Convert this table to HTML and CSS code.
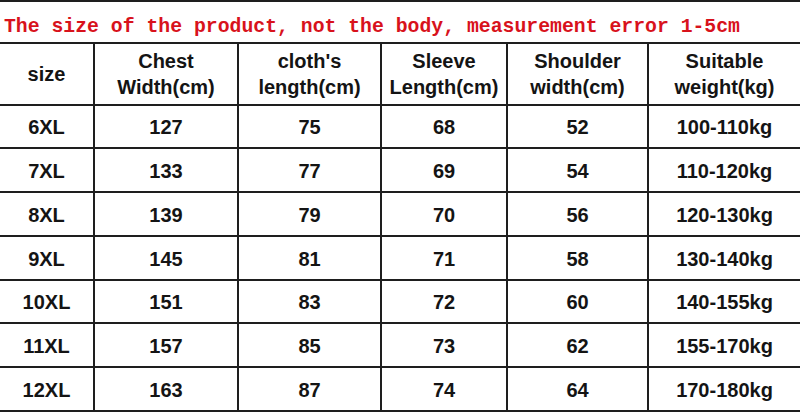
FILE: index.html
```html
<!DOCTYPE html>
<html>
<head>
<meta charset="utf-8">
<link rel="stylesheet" href="styles.css">
</head>
<body>
<div class="title">The size of the product, not the body, measurement error 1-5cm</div>
<table class="sizes">
  <colgroup>
    <col class="c1"><col class="c2"><col class="c3"><col class="c4"><col class="c5"><col class="c6">
  </colgroup>
  <thead>
    <tr>
      <th>size</th>
      <th>Chest<br>Width(cm)</th>
      <th>cloth's<br>length(cm)</th>
      <th>Sleeve<br>Length(cm)</th>
      <th>Shoulder<br>width(cm)</th>
      <th>Suitable<br>weight(kg)</th>
    </tr>
  </thead>
  <tbody>
    <tr><td>6XL</td><td>127</td><td>75</td><td>68</td><td>52</td><td>100-110kg</td></tr>
    <tr><td>7XL</td><td>133</td><td>77</td><td>69</td><td>54</td><td>110-120kg</td></tr>
    <tr><td>8XL</td><td>139</td><td>79</td><td>70</td><td>56</td><td>120-130kg</td></tr>
    <tr><td>9XL</td><td>145</td><td>81</td><td>71</td><td>58</td><td>130-140kg</td></tr>
    <tr><td>10XL</td><td>151</td><td>83</td><td>72</td><td>60</td><td>140-155kg</td></tr>
    <tr><td>11XL</td><td>157</td><td>85</td><td>73</td><td>62</td><td>155-170kg</td></tr>
    <tr><td>12XL</td><td>163</td><td>87</td><td>74</td><td>64</td><td>170-180kg</td></tr>
  </tbody>
</table>
</body>
</html>
```

FILE: styles.css
```css
html, body {
  margin: 0;
  padding: 0;
  background: #ffffff;
  overflow: hidden;
}
body {
  width: 800px;
  height: 413px;
}
.title {
  box-sizing: border-box;
  height: 42px;
  border-top: 2px solid #1e1e1e;
  padding: 9px 0 0 4px;
  line-height: 32px;
  font-family: "Liberation Mono", "DejaVu Sans Mono", monospace;
  font-size: 19.8px;
  font-weight: bold;
  color: #d8121c;
  white-space: nowrap;
}
.sizes {
  border-collapse: separate;
  border-spacing: 0;
  table-layout: fixed;
  width: 800px;
  border-top: 2px solid #1e1e1e;
  font-family: "Liberation Sans", Arial, sans-serif;
  font-weight: bold;
  font-size: 20px;
  color: #141414;
}
.c1 { width: 95px; }
.c2 { width: 144px; }
.c3 { width: 143px; }
.c4 { width: 126px; }
.c5 { width: 141px; }
.c6 { width: 151px; }
.sizes th, .sizes td {
  box-sizing: border-box;
  padding: 0;
  text-align: center;
  vertical-align: middle;
  border-right: 2px solid #1e1e1e;
  border-bottom: 2px solid #1e1e1e;
  line-height: 26px;
  font-weight: bold;
}
.sizes th:last-child, .sizes td:last-child {
  border-right: none;
}
.sizes th {
  height: 61.5px;
}
.sizes td {
  height: 43.75px;
  padding-top: 2px;
}
```
